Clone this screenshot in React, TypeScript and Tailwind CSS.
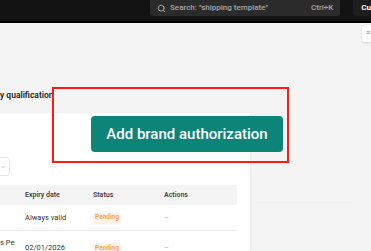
import { Search, ChevronDown } from "lucide-react";

const font = { fontFamily: "Roboto, 'Liberation Sans', sans-serif" };

function Header() {
  return (
    <div className="flex h-[23px] items-start border-b-2 border-black bg-[#131313]">
      <div className="ml-[150px] flex h-[16px] w-[191px] items-center rounded-b-[3px] bg-[#2b2b2b] pl-[7px] pr-[7px] text-[8px] text-[#a8a8a8]">
        <Search className="h-[9px] w-[9px]" strokeWidth={2.6} />
        <span className="ml-[4px] font-medium">Search: "shipping template"</span>
        <span className="ml-auto font-medium">Ctrl+K</span>
      </div>
      <div className="ml-[13px] flex h-[16px] flex-1 items-center rounded-bl-[3px] bg-[#1d1d1d] pl-[8px] text-[8px] font-bold text-white">
        Cu
      </div>
    </div>
  );
}

function Pending() {
  return (
    <span className="inline-flex h-[11px] items-center rounded-[2px] bg-[#fff2e6] px-[2px] text-[6.5px] font-semibold text-[#f6a14a]">
      Pending
    </span>
  );
}

function Table() {
  return (
    <div className="mr-[13px] text-[7.5px] text-[#333]">
      <div className="grid h-[20px] grid-cols-[25px_68px_71px_1fr] items-center bg-[#f4f4f4] text-[7px] font-semibold text-[#444]">
        <span />
        <span>Expiry date</span>
        <span>Status</span>
        <span>Actions</span>
      </div>
      <div className="grid h-[26px] grid-cols-[25px_68px_71px_1fr] items-center border-b border-[#ececec]">
        <span />
        <span>Always valid</span>
        <span>
          <Pending />
        </span>
        <span className="text-[#8cc4bc]">–</span>
      </div>
      <div className="grid h-[34px] grid-cols-[25px_68px_71px_1fr] items-center">
        <span className="self-start pt-[6px] leading-[12px]">s Pe</span>
        <span>02/01/2026</span>
        <span>
          <Pending />
        </span>
        <span className="text-[#8cc4bc]">–</span>
      </div>
    </div>
  );
}

export default function App() {
  return (
    <div
      className="relative h-[251px] w-[371px] overflow-hidden bg-[#f4f4f4]"
      style={font}
    >
      <Header />
      <div className="flex">
        <div className="w-[250px]">
          <div className="h-[90px] pt-[66px] text-[8.5px] font-semibold text-[#222]">
            y qualification
          </div>
          <div className="h-[200px] bg-white pt-[44px] shadow-[1px_0_3px_rgba(0,0,0,0.03)]">
            <div className="ml-[-60px] flex h-[19px] w-[70px] items-center justify-end rounded-[3px] border border-[#e6e6e6] pr-[3px]">
              <ChevronDown className="h-[6px] w-[6px] text-[#999]" />
            </div>
            <div className="mt-[9px]">
              <Table />
            </div>
          </div>
        </div>
        <div className="flex flex-1 flex-col items-end pt-[2px]">
          <div className="flex h-[17px] w-[9px] items-center justify-end rounded-l-[3px] bg-white pr-[1px] text-[7px] text-[#777] shadow-[0_1px_3px_rgba(0,0,0,0.12)]">
            ≡
          </div>
          <div className="ml-[5px] mt-[160px] h-px w-[95px] self-start bg-[#efefef]" />
        </div>
      </div>

      {/* annotation overlay */}
      <div className="absolute left-[52px] top-[87px] h-[76px] w-[237px] border-2 border-[#ff1a1a]" />
      <div className="absolute left-[91px] top-[116px] flex h-[36px] w-[192px] items-center justify-center rounded-[4px] bg-[#0c8478] text-[15px] font-medium text-white">
        Add brand authorization
      </div>
    </div>
  );
}
